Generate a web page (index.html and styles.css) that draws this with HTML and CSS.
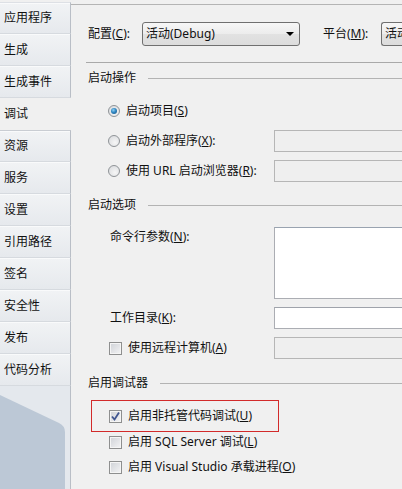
FILE: index.html
```html
<!DOCTYPE html>
<html lang="zh-CN">
<head>
<meta charset="utf-8">
<title>调试</title>
<link rel="stylesheet" href="styles.css">
</head>
<body>
<div class="app">
  <nav class="side">
    <div class="tab first">应用程序</div>
    <div class="tab">生成</div>
    <div class="tab">生成事件</div>
    <div class="tab sel">调试</div>
    <div class="tab after">资源</div>
    <div class="tab">服务</div>
    <div class="tab">设置</div>
    <div class="tab">引用路径</div>
    <div class="tab">签名</div>
    <div class="tab">安全性</div>
    <div class="tab">发布</div>
    <div class="tab">代码分析</div>
    <div class="filler">
      <svg class="deco" width="70" height="103" viewBox="0 0 70 103">
        <path d="M0 9 L59 37 Q65 40 65 46 L65 103 L0 103 Z" fill="#bcc8d6"/>
      </svg>
    </div>
  </nav>
  <main class="panel">
    <div class="cfg">
      <span class="lbl l1">配置(<u>C</u>):</span>
      <div class="combo c1"><span>活动(Debug)</span><i class="arrow"></i></div>
      <span class="lbl l2">平台(<u>M</u>):</span>
      <div class="combo c2"><span>活动</span></div>
    </div>
    <div class="sep"></div>

    <div class="hdr h1"><span>启动操作</span><i></i></div>
    <div class="group">
      <div class="frow"><label class="opt"><span class="radio on"></span><span>启动项目(<u>S</u>)</span></label></div>
      <div class="frow"><label class="opt"><span class="radio"></span><span>启动外部程序(<u>X</u>):</span></label><div class="box dis"></div></div>
      <div class="frow"><label class="opt"><span class="radio"></span><span>使用 URL 启动浏览器(<u>R</u>):</span></label><div class="box dis"></div></div>
    </div>

    <div class="hdr h2"><span>启动选项</span><i></i></div>
    <div class="frow cmd"><span class="flbl">命令行参数(<u>N</u>):</span><div class="box area"></div></div>
    <div class="frow work"><span class="flbl">工作目录(<u>K</u>):</span><div class="box"></div></div>
    <div class="frow remote"><label class="opt ck"><span class="cb"></span><span>使用远程计算机(<u>A</u>)</span></label><div class="box dis"></div></div>

    <div class="hdr h3"><span>启用调试器</span><i></i></div>
    <div class="hl">
      <label class="opt"><span class="cb on"><svg width="11" height="11" viewBox="0 0 11 11"><path d="M2 5.5 L4.5 8.5 L9 1.5" fill="none" stroke="#3f5590" stroke-width="1.8"/></svg></span><span>启用非托管代码调试(<u>U</u>)</span></label>
    </div>
    <div class="crow sql"><label class="opt"><span class="cb"></span><span>启用 SQL Server 调试(<u>L</u>)</span></label></div>
    <div class="crow vs"><label class="opt"><span class="cb"></span><span>启用 Visual Studio 承载进程(<u>O</u>)</span></label></div>
  </main>
</div>
</body>
</html>
```

FILE: styles.css
```css
html, body {
  margin: 0;
  padding: 0;
  width: 402px;
  height: 489px;
  overflow: hidden;
  background: #f0f0f0;
}
body {
  font-family: "Noto Sans", "Noto Sans CJK SC", sans-serif;
  font-size: 12px;
  line-height: 16px;
  color: #111;
}
u { text-decoration: underline; text-underline-offset: 1px; }

.app {
  display: flex;
  height: 489px;
}

/* ---------- side tabs ---------- */
.side {
  width: 71px;
  flex: none;
  display: flex;
  flex-direction: column;
  padding-top: 2px;
  box-sizing: border-box;
  background: #f0f0f0;
}
.tab {
  height: 32px;
  box-sizing: border-box;
  padding-left: 4px;
  display: flex;
  align-items: center;
  background: linear-gradient(#f1f3f5, #e6e9ed);
  border-right: 1px solid #b9bec6;
  border-bottom: 1px solid #d6dadf;
  box-shadow: inset 0 1px 0 #f9fafb;
}
.tab.first { border-top: 1px solid #dde0e5; }
.tab.sel {
  background: #f0f0f0;
  border-right: none;
  border-bottom: none;
  box-shadow: none;
}
.tab.after { border-top: 1px solid #c9cdd3; }
.filler {
  flex: 1;
  background: #e4e8ed;
  border-right: 1px solid #b9bec6;
  overflow: hidden;
}
.deco { display: block; }

/* ---------- main panel ---------- */
.panel {
  flex: 1;
  min-width: 0;
  margin-top: 4px;
  border-top: 1px solid #b4b4b4;
  padding: 17px 0 0 17px;
  overflow: hidden;
  background: #f0f0f0;
}

.cfg {
  display: flex;
  align-items: center;
  height: 24px;
  white-space: nowrap;
}
.lbl { flex: none; }
.l1 { width: 54px; }
.l2 { width: 58px; margin-left: 23px; }
.combo {
  flex: none;
  height: 24px;
  box-sizing: border-box;
  border: 1px solid #707070;
  border-radius: 3px;
  background: linear-gradient(#f7f7f7, #ececec 50%, #e2e2e2 51%, #dcdcdc);
  display: flex;
  align-items: center;
  padding-left: 3px;
  position: relative;
}
.c1 { width: 158px; }
.c2 { width: 21px; border-right: none; border-radius: 3px 0 0 3px; overflow: hidden; }
.arrow {
  position: absolute;
  right: 5px;
  top: 9px;
  width: 0;
  height: 0;
  border-left: 4px solid transparent;
  border-right: 4px solid transparent;
  border-top: 4px solid #000;
}

.sep {
  margin: 16px 0 0 -2px;
  height: 1px;
  background: #a9a9a9;
}

.hdr {
  display: flex;
  align-items: center;
  height: 16px;
}
.hdr span { flex: none; }
.hdr i {
  flex: 1;
  height: 1px;
  margin-left: 12px;
  background: #b3b3b3;
}
.h1 { margin-top: 7px; }
.h2 { margin-top: 15px; }
.h3 { margin-top: 16px; }

.group {
  margin-top: 14px;
  display: flex;
  flex-direction: column;
  gap: 8px;
}
.frow {
  display: grid;
  grid-template-columns: 186px 1fr;
  height: 22px;
  align-items: center;
}
.opt {
  display: flex;
  align-items: center;
  gap: 6px;
  margin-left: 20px;
  white-space: nowrap;
}
.opt.ck { margin-left: 21px; gap: 6px; }

.box {
  height: 22px;
  width: 200px;
  box-sizing: border-box;
  background: #fff;
  border: 1px solid #abadb3;
  border-top-color: #9fa3ab;
}
.box.dis {
  background: #efefef;
  border-color: #b6b6b6;
}
.box.area { height: 72px; border-top-color: #99a3b0; }

.flbl { margin-left: 22px; white-space: nowrap; }

.cmd { margin-top: 14px; height: 72px; align-items: start; }
.cmd .flbl { margin-top: 2px; }
.work { margin-top: 8px; }
.remote { margin-top: 8px; }

.radio {
  width: 12px;
  height: 12px;
  flex: none;
  box-sizing: border-box;
  border-radius: 50%;
  border: 1px solid #8f9397;
  background: radial-gradient(circle at 60% 65%, #f6f6f6 0, #e3e4e6 60%, #d6d8db 100%);
  position: relative;
}
.radio.on::after {
  content: "";
  position: absolute;
  left: 2px;
  top: 2px;
  width: 6px;
  height: 6px;
  border-radius: 50%;
  background: radial-gradient(circle at 40% 35%, #8fd0f2 0, #2f86c2 45%, #174f7c 100%);
}

.cb {
  width: 13px;
  height: 13px;
  flex: none;
  box-sizing: border-box;
  border: 1px solid #8e8f8f;
  background: linear-gradient(135deg, #cfd2d7, #f4f4f5);
  box-shadow: inset 0 0 0 1px #f5f5f5;
  display: flex;
  align-items: center;
  justify-content: center;
}
.cb svg { display: block; }

.hl {
  margin: 9px 0 0 3px;
  width: 188px;
  height: 32px;
  box-sizing: border-box;
  border: 1px solid #d22a2a;
  display: flex;
  align-items: center;
}
.hl .opt { margin-left: 17px; }

.crow {
  height: 20px;
  display: flex;
  align-items: center;
}
.crow .opt { margin-left: 21px; }
.vs { margin-top: 5px; }
```
